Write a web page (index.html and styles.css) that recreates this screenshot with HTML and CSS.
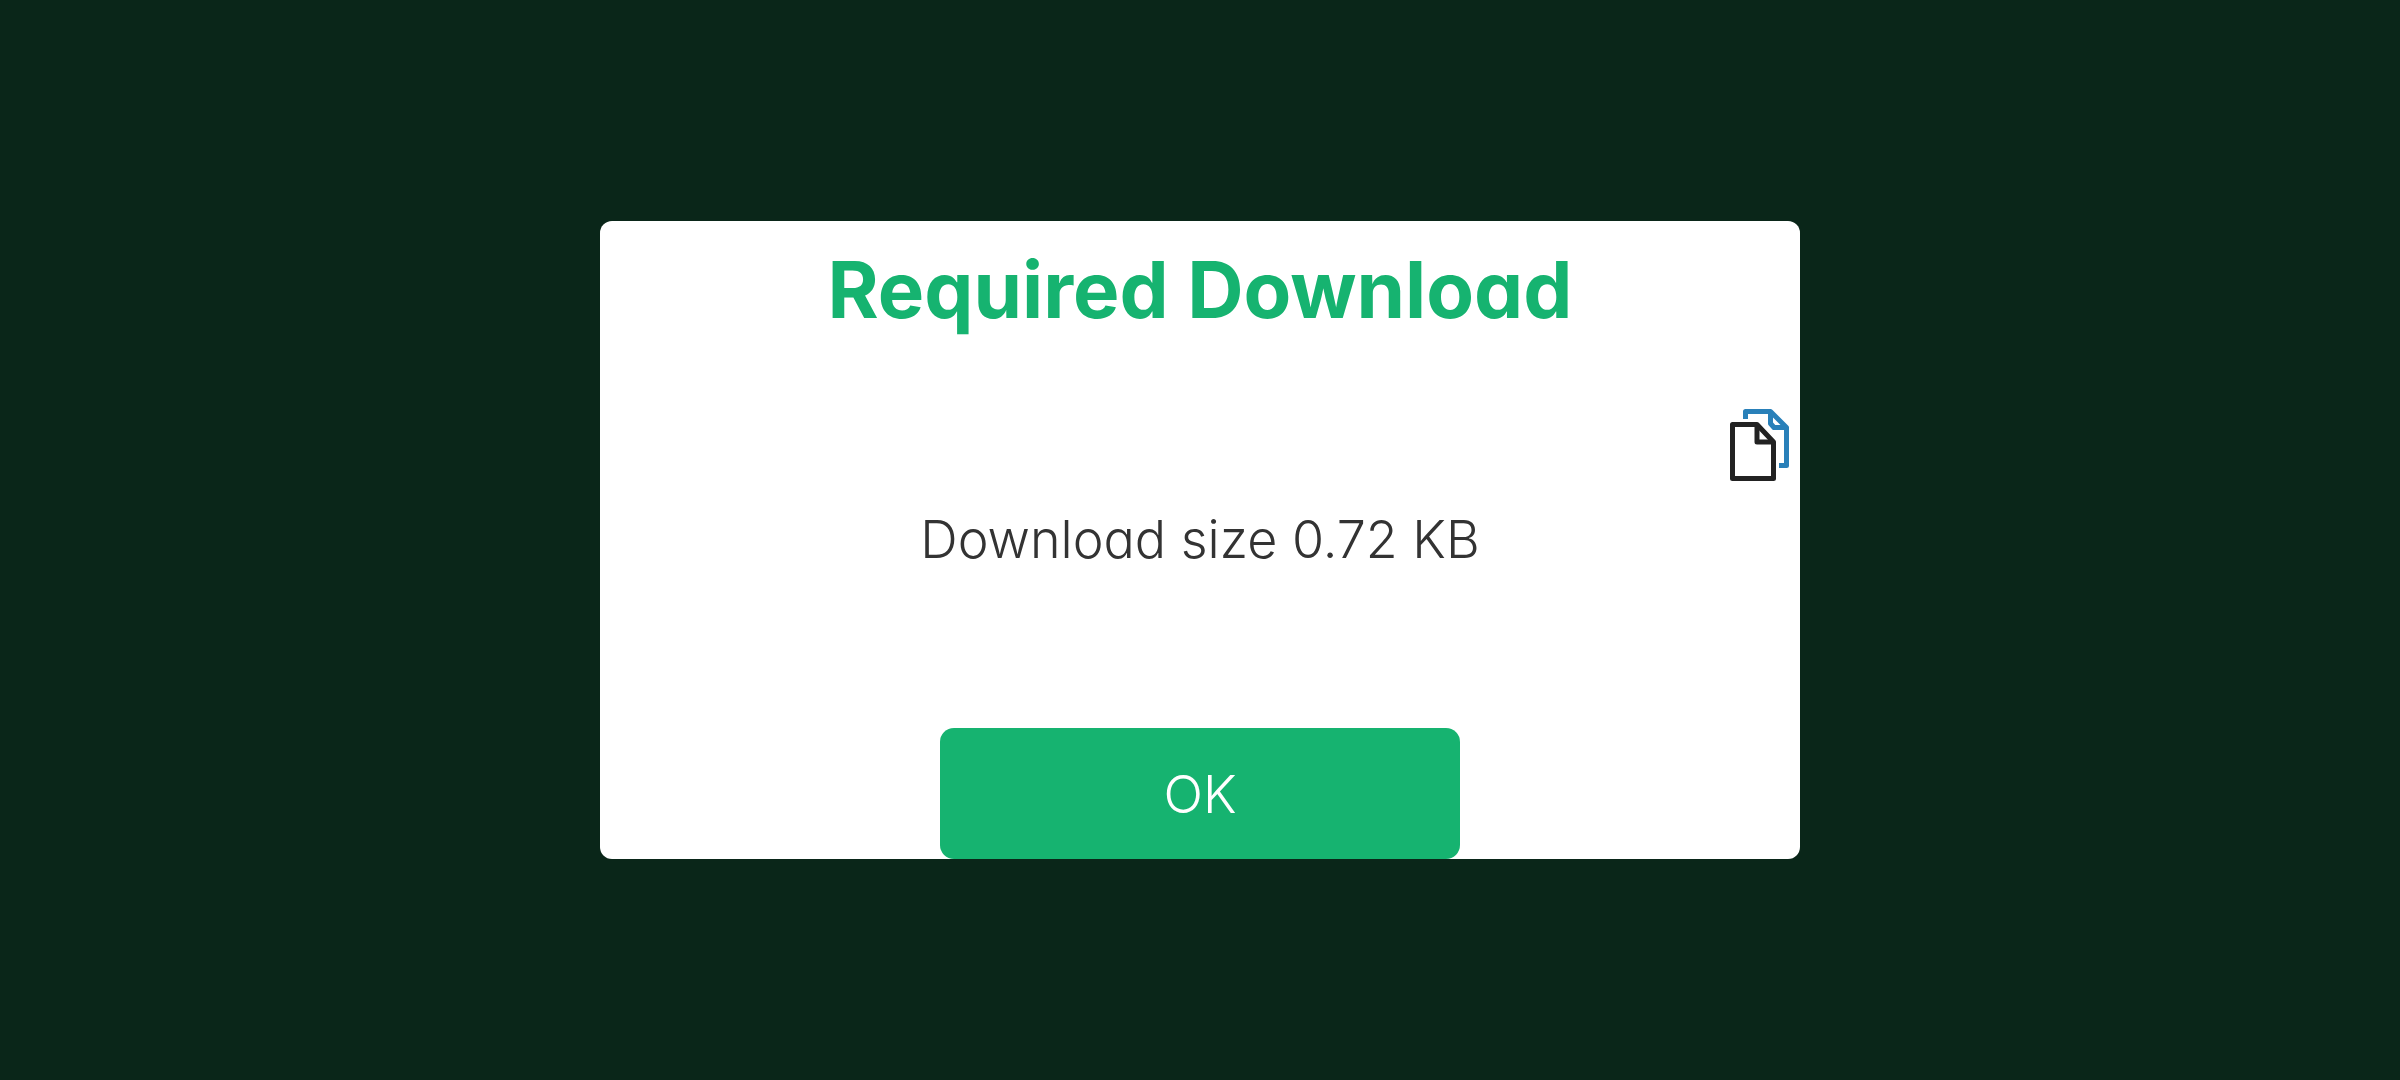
FILE: index.html
```html
<!DOCTYPE html>
<html lang="en">
<head>
  <meta charset="utf-8">
  <meta name="viewport" content="width=device-width, initial-scale=1">
  <title>Required Download</title>
  <link rel="stylesheet" href="styles.css">
</head>
<body>
  <main class="dialog" role="dialog" aria-labelledby="dialog-title" aria-describedby="dialog-message">
    <h1 class="dialog-title" id="dialog-title">Required Download</h1>
    <button class="copy-button" type="button" aria-label="Copy">
      <svg class="copy-icon" viewBox="0 0 60 73" fill="none" stroke-width="5" stroke-linejoin="round" aria-hidden="true">
        <g stroke="#2980b9">
          <path d="M15.500 10V2.500H40.500L56.500 18.500V56.500H49"/>
          <path d="M40.500 2.500V14.500L44 18.500H56.500"/>
        </g>
        <g stroke="#222222">
          <path d="M2.500 15.500H27L43.500 33V69.500H2.500Z"/>
          <path d="M27 15.500V33H43.500"/>
        </g>
      </svg>
    </button>
    <p class="dialog-message" id="dialog-message">Download size 0.72 KB</p>
    <button class="ok-button" type="button">OK</button>
  </main>
</body>
</html>
```
FILE: styles.css
```css
* {
  box-sizing: border-box;
}

body {
  min-height: 100vh;
  margin: 0;
  display: flex;
  align-items: center;
  justify-content: center;
  background: #0a2619;
  font-family: Inter, sans-serif;
  /* Single-storey "a" */
  font-feature-settings: "cv11";
}

.dialog {
  width: 50%;
  padding-top: 21px;
  display: flex;
  flex-direction: column;
  align-items: center;
  border-radius: 12px;
  background: #ffffff;
}

.dialog-title {
  margin: 0;
  color: #16b370;
  font-size: 78px;
  font-weight: 700;
  line-height: 96px;
  text-align: center;
}

.copy-button {
  align-self: flex-end;
  margin: 71px 10px 26px 0;
  padding: 0;
  border: 0;
  background: none;
  cursor: pointer;
}

.copy-icon {
  display: block;
  width: 60px;
  height: 73px;
}

.dialog-message {
  margin: 0 0 156px;
  color: #333333;
  font-size: 52px;
  font-weight: 300;
  line-height: 64px;
  text-align: center;
}

.ok-button {
  width: 520px;
  max-width: 100%;
  padding: 35px 16px 32px;
  border: 0;
  border-radius: 14px;
  background: #16b370;
  color: #ffffff;
  font: inherit;
  font-feature-settings: inherit;
  font-size: 52px;
  font-weight: 300;
  line-height: 64px;
  cursor: pointer;
}
```
